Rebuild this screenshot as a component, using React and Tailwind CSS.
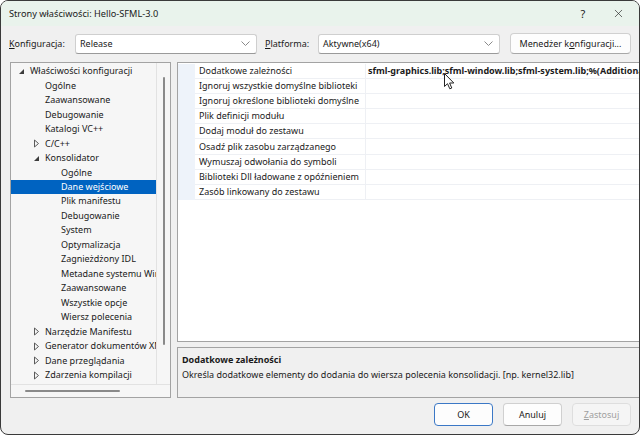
import { X } from 'lucide-react';

const font = { fontFamily: '"Noto Sans", "Open Sans", sans-serif' };

const Chevron = () => (
    <svg width="9" height="5" viewBox="0 0 9 5" className="shrink-0">
        <path d="M0.5 0.5 L4.5 4.5 L8.5 0.5" fill="none" stroke="#8a8a8a" strokeWidth="1" />
    </svg>
);

const Expanded = () => (
    <svg width="7" height="7" viewBox="0 0 7 7">
        <path d="M6 1 L6 6 L1 6 Z" fill="#3c3c3c" />
    </svg>
);

const Collapsed = () => (
    <svg width="7" height="9" viewBox="0 0 7 9">
        <path d="M1.5 1 L5.5 4.5 L1.5 8 Z" fill="none" stroke="#5a5a5a" strokeWidth="1" />
    </svg>
);

const treeItems = [
    { label: 'Właściwości konfiguracji', level: 0, arrow: 'open' },
    { label: 'Ogólne', level: 1 },
    { label: 'Zaawansowane', level: 1 },
    { label: 'Debugowanie', level: 1 },
    { label: 'Katalogi VC++', level: 1 },
    { label: 'C/C++', level: 1, arrow: 'closed' },
    { label: 'Konsolidator', level: 1, arrow: 'open' },
    { label: 'Ogólne', level: 2 },
    { label: 'Dane wejściowe', level: 2, selected: true },
    { label: 'Plik manifestu', level: 2 },
    { label: 'Debugowanie', level: 2 },
    { label: 'System', level: 2 },
    { label: 'Optymalizacja', level: 2 },
    { label: 'Zagnieżdżony IDL', level: 2 },
    { label: 'Metadane systemu Windows', level: 2 },
    { label: 'Zaawansowane', level: 2 },
    { label: 'Wszystkie opcje', level: 2 },
    { label: 'Wiersz polecenia', level: 2 },
    { label: 'Narzędzie Manifestu', level: 1, arrow: 'closed' },
    { label: 'Generator dokumentów XML', level: 1, arrow: 'closed' },
    { label: 'Dane przeglądania', level: 1, arrow: 'closed' },
    { label: 'Zdarzenia kompilacji', level: 1, arrow: 'closed' },
];

const props = [
    ['Dodatkowe zależności', 'sfml-graphics.lib;sfml-window.lib;sfml-system.lib;%(AdditionalDependencies)'],
    ['Ignoruj wszystkie domyślne biblioteki', ''],
    ['Ignoruj określone biblioteki domyślne', ''],
    ['Plik definicji modułu', ''],
    ['Dodaj moduł do zestawu', ''],
    ['Osadź plik zasobu zarządzanego', ''],
    ['Wymuszaj odwołania do symboli', ''],
    ['Biblioteki Dll ładowane z opóźnieniem', ''],
    ['Zasób linkowany do zestawu', ''],
];

const indent = { 0: 'pl-[7px]', 1: 'pl-[22px]', 2: 'pl-[38px]' };

const App = () => {
    return (
        <div className="w-[640px] h-[435px] overflow-hidden rounded-[8px] border border-[#3a3a3a] bg-[#f0f0f0] text-[9px] leading-[12px] text-[#1a1a1a] flex flex-col relative" style={font}>
            {/* title bar */}
            <div className="h-[25px] shrink-0 bg-[#e9f3ec] flex items-center pl-[8px] pr-[14px]">
                <span className="flex-1 pt-[1px] text-[9.2px]">Strony właściwości: Hello-SFML-3.0</span>
                <span className="w-[10px] text-center mr-[24px] text-[11px]">?</span>
                <X size={13} strokeWidth={1.2} className="text-[#222]" />
            </div>

            {/* configuration row */}
            <div className="h-[21px] mt-[7px] shrink-0 flex items-center pl-[8px] pr-[8px]">
                <span className="w-[66px]"><u>K</u>onfiguracja:</span>
                <div className="w-[182px] h-[20px] bg-white border border-[#cfcfcf] border-b-[#9a9a9a] rounded-[3px] flex items-center pl-[4px] pr-[6px]">
                    <span className="flex-1">Release</span>
                    <Chevron />
                </div>
                <span className="ml-[8px] w-[53px]"><u>P</u>latforma:</span>
                <div className="w-[182px] h-[20px] bg-white border border-[#cfcfcf] border-b-[#9a9a9a] rounded-[3px] flex items-center pl-[4px] pr-[6px]">
                    <span className="flex-1">Aktywne(x64)</span>
                    <Chevron />
                </div>
                <div className="ml-[10px] w-[121px] h-[21px] bg-[#fdfdfd] border border-[#d0d0d0] border-b-[#a8a8a8] rounded-[4px] flex items-center justify-center whitespace-nowrap">
                    Menedżer k<u>o</u>nfiguracji...
                </div>
            </div>

            {/* main */}
            <div className="mt-[8px] h-[336px] shrink-0 flex pl-[9px] pr-[6px] gap-[6px]">
                {/* tree */}
                <div className="w-[161px] h-full border border-[#a3a3a3] bg-[#f6f6f6] flex flex-col">
                    <div className="flex-1 flex min-h-0">
                        <div className="flex-1 overflow-hidden pt-[1px]">
                            {treeItems.map((it, i) => (
                                <div key={i} className={`h-[14.48px] flex items-center whitespace-nowrap ${indent[it.level]} ${it.selected ? 'bg-[#0063c1] text-white' : ''}`}>
                                    <span className="w-[12px] flex items-center justify-start shrink-0">
                                        {it.arrow === 'open' && <Expanded />}
                                        {it.arrow === 'closed' && <Collapsed />}
                                    </span>
                                    <span>{it.label}</span>
                                </div>
                            ))}
                        </div>
                        <div className="w-[14px] shrink-0 border-l border-[#e2e2e2] flex justify-center pt-[14px]">
                            <div className="w-[2px] h-[268px] bg-[#8a8a8a] rounded-full" />
                        </div>
                    </div>
                    <div className="h-[13px] shrink-0 border-t border-[#e2e2e2] flex items-center pl-[14px]">
                        <div className="w-[95px] h-[2px] bg-[#8a8a8a] rounded-full" />
                    </div>
                </div>

                {/* right column */}
                <div className="flex-1 flex flex-col gap-[5px]">
                    <div className="h-[281px] border border-[#a3a3a3] bg-white pt-[1px] flex flex-col">
                        {props.map(([name, value], i) => (
                            <div key={i} className="h-[15.1px] flex">
                                <div className="w-[17px] shrink-0 bg-[#eef3fa]" />
                                <div className="w-[171px] shrink-0 border-b border-r border-[#eef0f4] pl-[4px] flex items-center whitespace-nowrap overflow-hidden">{name}</div>
                                <div className="flex-1 min-w-0 border-b border-[#eef0f4] pl-[2px] flex items-center whitespace-nowrap overflow-hidden font-bold mr-[2px]">{value}</div>
                            </div>
                        ))}
                    </div>
                    <div className="h-[51px] border border-[#a3a3a3] bg-[#f0f0f0] px-[4px] pt-[4px] leading-[15px]">
                        <div className="font-bold">Dodatkowe zależności</div>
                        <div>Określa dodatkowe elementy do dodania do wiersza polecenia konsolidacji. [np. kernel32.lib]</div>
                    </div>
                </div>
            </div>

            {/* buttons */}
            <div className="mt-[5px] flex justify-end gap-[10px] pr-[8px]">
                <div className="w-[59px] h-[23px] bg-[#fdfdfd] border-[1.5px] border-[#3b78c6] rounded-[4px] flex items-center justify-center">OK</div>
                <div className="w-[59px] h-[23px] bg-[#fdfdfd] border border-[#d0d0d0] border-b-[#a8a8a8] rounded-[4px] flex items-center justify-center">Anuluj</div>
                <div className="w-[59px] h-[23px] bg-[#f5f5f5] border border-[#dedede] rounded-[4px] flex items-center justify-center text-[#a0a0a0]"><u>Z</u>astosuj</div>
            </div>

            {/* mouse cursor */}
            <svg className="absolute left-[443px] top-[72px]" width="11" height="17" viewBox="0 0 11 17">
                <path d="M0.5 0.5 L0.5 13.5 L3.5 10.7 L5.8 15.8 L7.8 15 L5.6 10 L9.8 10 Z" fill="white" stroke="#222" strokeWidth="1" strokeLinejoin="round" />
            </svg>
        </div>
    );
};

export default App;
